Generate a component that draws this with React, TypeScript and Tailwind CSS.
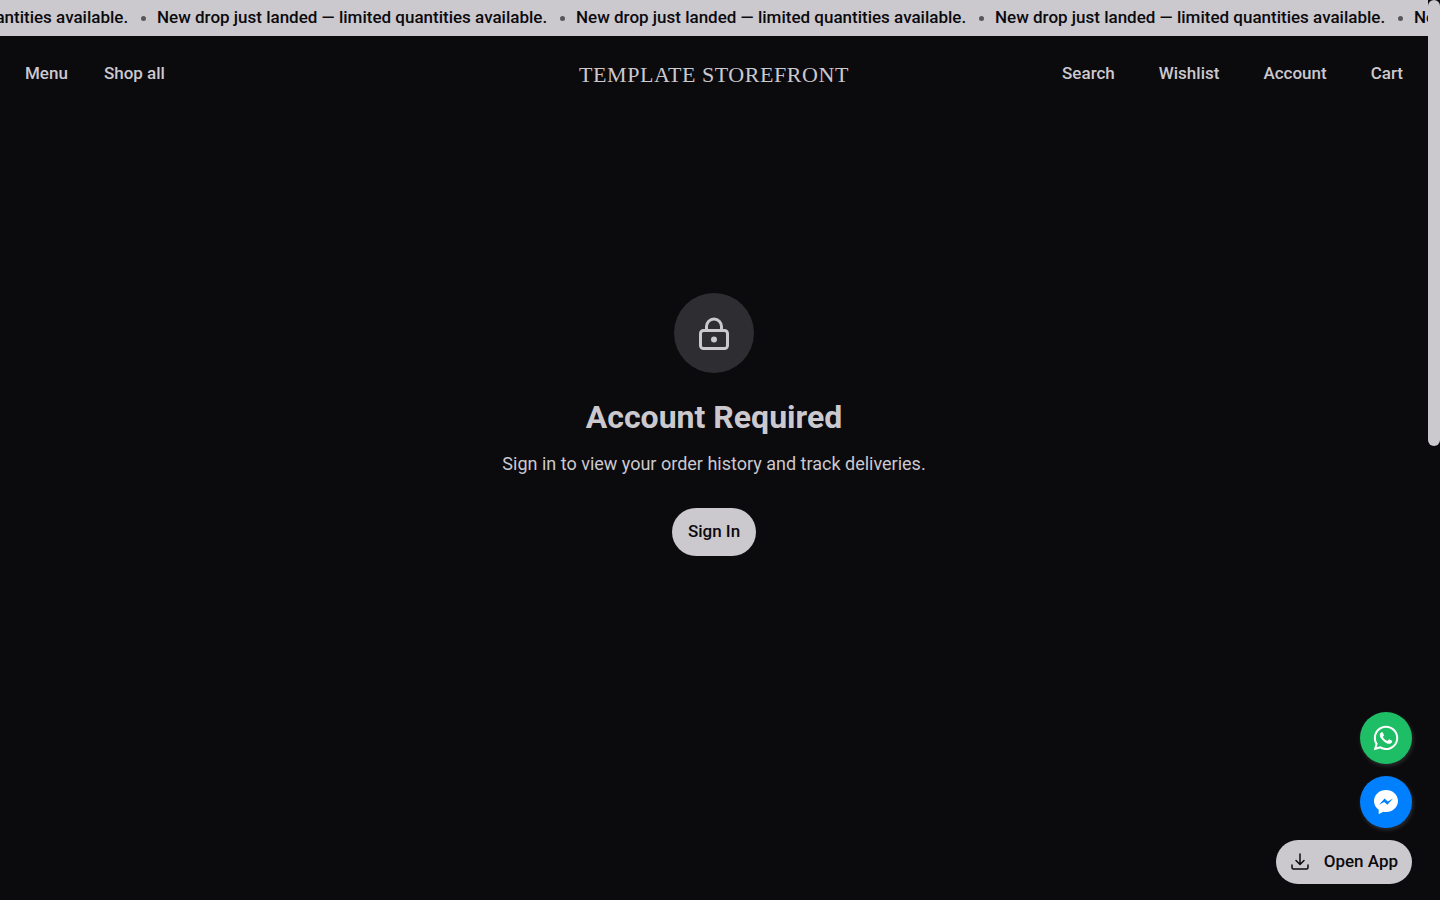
// App.tsx — Storefront orders page, signed-out state
import React from "react";
import { FaWhatsapp } from "react-icons/fa";

const ANNOUNCEMENT = "New drop just landed — limited quantities available.";

const LEFT_LINKS = ["Menu", "Shop all"];
const RIGHT_LINKS = ["Search", "Wishlist", "Account", "Cart"];

function AnnouncementBar() {
  return (
    <div className="flex h-9 items-center justify-end overflow-hidden bg-[#cbc9cd] text-[17px] font-medium text-[#0b0a0d]">
      <div className="-mr-[405px] flex shrink-0 items-center">
        {[0, 1, 2, 3, 4].map(i => (
          <div key={i} className="flex w-[419px] shrink-0 items-center justify-between whitespace-nowrap pr-[11px]">
            <span>{ANNOUNCEMENT}</span>
            <span className="h-[5px] w-[5px] rounded-full bg-[#57565a]" />
          </div>
        ))}
      </div>
    </div>
  );
}

function Header() {
  return (
    <header className="grid h-[76px] grid-cols-[1fr_auto_1fr] items-center px-[25px] text-[17px] font-medium">
      <nav aria-label="Shop" className="flex gap-9">
        {LEFT_LINKS.map(label => (
          <a key={label} href="#">{label}</a>
        ))}
      </nav>
      <a href="#" className="font-['Liberation_Serif',serif] text-[22px] tracking-wide">TEMPLATE STOREFRONT</a>
      <nav aria-label="Customer" className="flex justify-end gap-11">
        {RIGHT_LINKS.map(label => (
          <a key={label} href="#">{label}</a>
        ))}
      </nav>
    </header>
  );
}

function LockIcon() {
  return (
    <svg viewBox="0 0 40 40" className="h-10 w-10" fill="none" stroke="currentColor" strokeWidth="3" aria-hidden="true">
      <rect x="6.5" y="17.5" width="27" height="18" rx="3" />
      <path d="M12.5 17.5v-4a7.5 7.5 0 0 1 15 0v4" />
      <circle cx="20" cy="26.5" r="3" fill="currentColor" stroke="none" />
    </svg>
  );
}

function MessengerIcon() {
  return (
    <svg viewBox="0 0 24 24" className="h-6 w-6" aria-hidden="true">
      <path fill="currentColor" d="M12 0C5.4 0 0 4.9 0 11c0 3.6 1.8 6.800 4.700 8.800V24.200l4.600-2.500c.9.200 1.800.3 2.700.3 6.600 0 12-4.900 12-11S18.600 0 12 0z" />
      <path fill="#0080ff" d="M10.600 8.500 5 14.800l5.200-2.900 3.200 2.900L19 8.500l-5.200 2.900z" />
    </svg>
  );
}

function DownloadIcon() {
  return (
    <svg viewBox="0 0 20 20" className="h-5 w-5" fill="none" stroke="currentColor" strokeWidth="1.5" strokeLinecap="round" strokeLinejoin="round" aria-hidden="true">
      <path d="M10 2v10M6 8.500l4 4 4-4" />
      <path d="M2 13v2.500A1.500 1.500 0 0 0 3.500 17h13a1.500 1.500 0 0 0 1.500-1.500V13" />
    </svg>
  );
}

export default function App() {
  const chatCls = "flex h-[52px] w-[52px] items-center justify-center rounded-full text-white shadow-[1px_2px_4px_rgba(255,255,255,0.15)]";

  return (
    <div className="flex min-h-screen bg-[#0b0a0d] font-['Roboto',sans-serif] text-[#cbc9cd]">
      <div className="flex min-w-0 flex-1 flex-col">
        <AnnouncementBar />
        <Header />

        {/* Sign in prompt */}
        <main className="flex flex-col items-center px-6 pt-[181px] text-center">
          <div className="flex h-20 w-20 items-center justify-center rounded-full bg-[#2e2d31]">
            <LockIcon />
          </div>
          <h1 className="mt-6 text-[32px] leading-10 font-bold">Account Required</h1>
          <p className="mt-[13px] text-lg leading-7">Sign in to view your order history and track deliveries.</p>
          <button className="mt-[30px] h-12 rounded-full bg-[#cbc9cd] px-4 text-[17px] font-medium text-[#0b0a0d]">Sign In</button>
        </main>
      </div>

      {/* Scroll track */}
      <div className="w-3 shrink-0" aria-hidden="true">
        <div className="h-[446px] rounded-full bg-[#cbc9cd]" />
      </div>

      {/* Floating actions */}
      <div className="fixed right-7 bottom-4 flex flex-col items-end gap-3">
        <a href="#" aria-label="WhatsApp" className={`${chatCls} bg-[#1ebe66]`}>
          <FaWhatsapp className="h-7 w-7" />
        </a>
        <a href="#" aria-label="Messenger" className={`${chatCls} bg-[#0080ff]`}>
          <MessengerIcon />
        </a>
        <button className="flex h-11 items-center gap-[14px] rounded-full bg-[#cbc9cd] px-[14px] text-[17px] font-medium text-[#0b0a0d]">
          <DownloadIcon />
          Open App
        </button>
      </div>
    </div>
  );
}
